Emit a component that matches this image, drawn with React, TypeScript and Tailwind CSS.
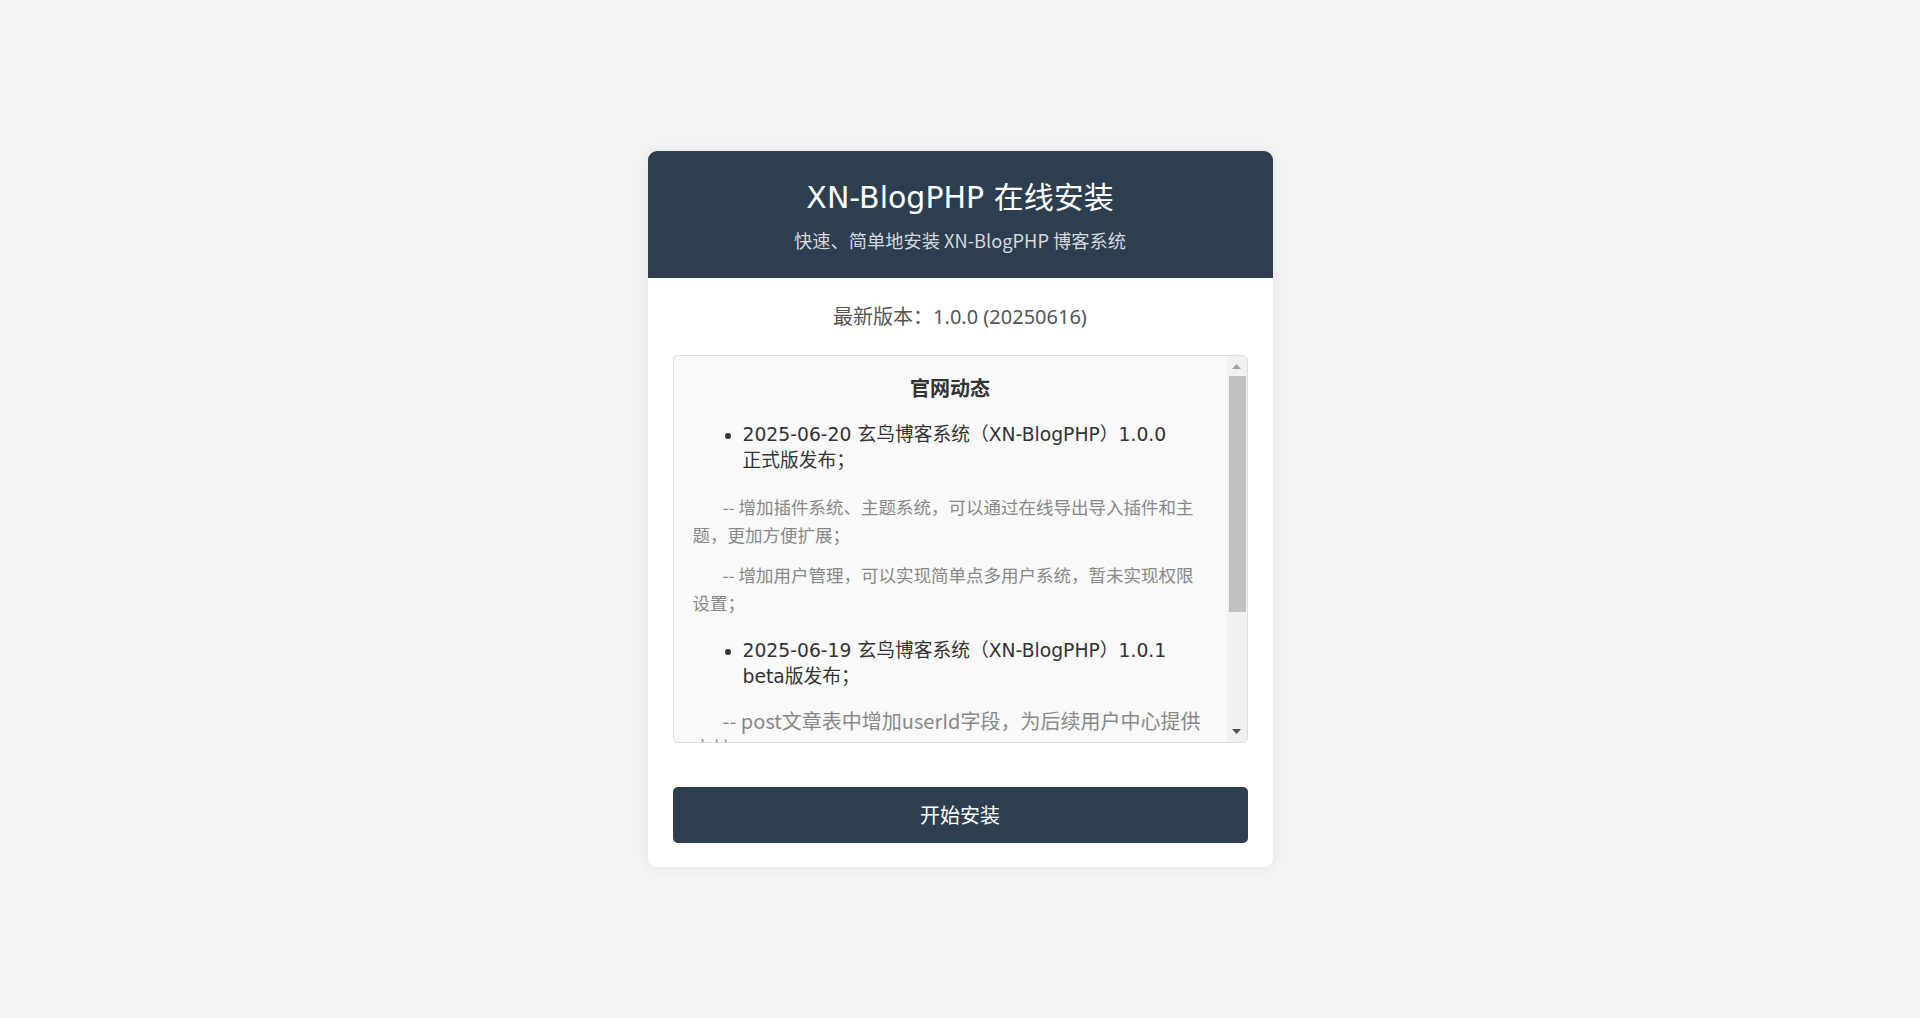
import React from "react";

const news = [
  {
    title: ["2025-06-20 玄鸟博客系统（XN-BlogPHP）1.0.0", "正式版发布；"],
    notes: [
      "-- 增加插件系统、主题系统，可以通过在线导出导入插件和主题，更加方便扩展；",
      "-- 增加用户管理，可以实现简单点多用户系统，暂未实现权限设置；",
    ],
  },
  {
    title: ["2025-06-19 玄鸟博客系统（XN-BlogPHP）1.0.1", "beta版发布；"],
    notes: ["-- post文章表中增加userId字段，为后续用户中心提供支持；"],
    big: true,
  },
  {
    title: ["2025-06-16 玄鸟博客系统（XN-BlogPHP）1.0.0", "beta版发布；"],
    notes: ["-- 修复若干已知问题；"],
  },
];

function Scrollbar() {
  return (
    <div className="w-[20px] shrink-0 flex flex-col bg-[#f1f1f1]">
      <div className="h-[20px] flex justify-center pt-[8px]">
        <svg width="9" height="5" viewBox="0 0 9 5">
          <polygon points="4.5,0 9,5 0,5" fill="#a3a3a3" />
        </svg>
      </div>
      <div className="flex-1 flex flex-col">
        <div className="h-[236px] ml-[2px] mr-[1px] bg-[#c1c1c1]" />
      </div>
      <div className="h-[20px] flex justify-center pt-[7px]">
        <svg width="9" height="5" viewBox="0 0 9 5">
          <polygon points="0,0 9,0 4.5,5" fill="#505050" />
        </svg>
      </div>
    </div>
  );
}

export default function App() {
  return (
    <div className="min-h-screen flex items-center justify-center bg-[#f4f4f4] font-['Noto_Sans','Noto_Sans_CJK_SC',sans-serif]">
      <div className="w-[625px] bg-white rounded-[9px] overflow-hidden shadow-[0_0_14px_rgba(0,0,0,0.07)]">
        {/* Header */}
        <div className="bg-[#2c3e50] text-center pt-[28px] pb-[24px]">
          <h1 className="text-[30px] leading-[38px] text-white font-normal font-['DejaVu_Sans','Noto_Sans_CJK_SC',sans-serif]">
            XN-BlogPHP 在线安装
          </h1>
          <p className="mt-[10px] text-[18.25px] leading-[27px] text-[#d5d9de] font-['Noto_Sans_CJK_SC',sans-serif]">
            快速、简单地安装 XN-BlogPHP 博客系统
          </p>
        </div>

        <div className="p-[25px] pb-[24px]">
          <p className="text-center text-[20px] leading-[28px] text-[#555]">最新版本：1.0.0 (20250616)</p>

          {/* News box */}
          <div className="mt-[24px] h-[388px] flex border border-[#dddddd] rounded-[5px] bg-[#f9f9f9] overflow-hidden">
            <div className="flex-1 min-w-0 overflow-hidden p-[19px]">
              <h3 className="text-center text-[20px] leading-[26px] font-bold text-[#333] font-['Noto_Sans_CJK_SC',sans-serif]">官网动态</h3>
              {news.map((n) => (
                <div key={n.title[0]}>
                  <ul
                    className={`list-disc pl-[50px] mt-[21px] text-[18.75px] leading-[26px] text-[#333] font-['DejaVu_Sans','Noto_Sans_CJK_SC',sans-serif] ${n.big ? "mb-[17px]" : "mb-[19px]"}`}
                  >
                    <li>
                      {n.title[0]}
                      <br />
                      {n.title[1]}
                    </li>
                  </ul>
                  {n.notes.map((t) => (
                    <p
                      key={t}
                      className={`my-[12px] indent-[30px] text-[#888] font-['Noto_Sans_CJK_SC',sans-serif] ${n.big ? "text-[20px] leading-[28px]" : "text-[17.5px] leading-[28px]"}`}
                    >
                      {t}
                    </p>
                  ))}
                </div>
              ))}
            </div>
            <Scrollbar />
          </div>

          <button className="mt-[44px] w-full h-[56px] rounded-[5px] bg-[#2c3e50] text-white text-[20px] font-['Noto_Sans_CJK_SC',sans-serif]">
            开始安装
          </button>
        </div>
      </div>
    </div>
  );
}
